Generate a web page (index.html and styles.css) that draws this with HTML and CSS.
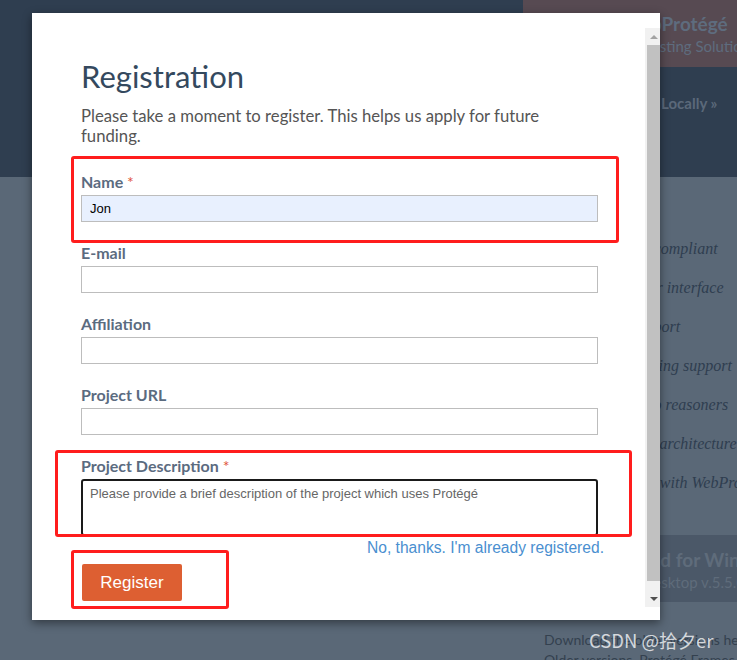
FILE: index.html
```html
<!DOCTYPE html>
<html lang="en">
<head>
<meta charset="utf-8">
<title>Registration</title>
<link rel="stylesheet" href="styles.css">
</head>
<body>
<div class="page">
  <header class="hero">
    <div class="hero-aside">
      <div class="brand">
        <div class="brand-name">WebProtégé</div>
        <div class="brand-sub">Hosting Solutions</div>
      </div>
      <div class="cta">Use Locally »</div>
    </div>
  </header>
  <section class="features">
    <div class="features-col">
      <ul class="feature-list">
        <li>W3C OWL 2 DL compliant</li>
        <li>Customizable user interface</li>
        <li>Visualization support</li>
        <li>Ontology refactoring support</li>
        <li>Direct interface to reasoners</li>
        <li>Highly pluggable architecture</li>
        <li>Cross compatible with WebProtégé</li>
      </ul>
      <div class="download-box">
        <div class="dl-title">Download for Windows</div>
        <div class="dl-sub">Desktop v.5.5.0</div>
      </div>
      <p class="dl-note">Download the older versions here<br>Older versions, Protégé Frames</p>
    </div>
  </section>
</div>

<div class="modal">
  <div class="frame">
    <div class="content">
      <h1 class="title">Registration</h1>
      <p class="intro">Please take a moment to register. This helps us apply for future funding.</p>
      <form class="form">
        <div class="field">
          <label class="label">Name <span class="req">*</span></label>
          <input class="input input-filled" type="text" value="Jon">
        </div>
        <div class="field">
          <label class="label">E-mail</label>
          <input class="input" type="text">
        </div>
        <div class="field">
          <label class="label">Affiliation</label>
          <input class="input" type="text">
        </div>
        <div class="field">
          <label class="label">Project URL</label>
          <input class="input" type="text">
        </div>
        <div class="field field-last">
          <label class="label">Project Description <span class="req">*</span></label>
          <textarea class="textarea" placeholder="Please provide a brief description of the project which uses Protégé"></textarea>
        </div>
        <div class="link-row"><a class="skip-link" href="#">No, thanks. I'm already registered.</a></div>
        <button class="btn" type="button">Register</button>
      </form>
    </div>
    <div class="scrollbar">
      <div class="sb-btn"><span class="arrow-up"></span></div>
      <div class="sb-track"><div class="sb-thumb"></div></div>
      <div class="sb-btn"><span class="arrow-down"></span></div>
    </div>
  </div>
</div>

<div class="mark mark-name"></div>
<div class="mark mark-desc"></div>
<div class="mark mark-btn"></div>

<div class="watermark">CSDN @拾夕er</div>
</body>
</html>
```

FILE: styles.css
```css
* { box-sizing: border-box; }

html, body {
  margin: 0;
  padding: 0;
}

body {
  width: 737px;
  height: 660px;
  overflow: hidden;
  position: relative;
  font-family: "Lato", "Open Sans", sans-serif;
  background: #5a6877;
}

/* ---------- backdrop page ---------- */
.page {
  display: flex;
  flex-direction: column;
  width: 737px;
}

.hero {
  height: 177px;
  background: #2f3e50;
  display: flex;
  justify-content: flex-end;
}

.hero-aside {
  width: 214px;
  display: flex;
  flex-direction: column;
}

.brand {
  height: 67px;
  background: #574a52;
  padding-top: 12px;
  padding-left: 99px;
  white-space: nowrap;
  color: #5e6c7e;
}

.brand-name {
  font-weight: 700;
  font-size: 19px;
  line-height: 24px;
}

.brand-sub {
  font-size: 15px;
  line-height: 20px;
  margin-left: 18px;
}

.cta {
  margin-top: 26px;
  padding-left: 109px;
  font-weight: 700;
  font-size: 15px;
  line-height: 20px;
  color: #5b697a;
  white-space: nowrap;
}

.features {
  background: #5a6877;
  padding-top: 52px;
  display: flex;
}

.features-col {
  margin-left: 544px;
  width: 240px;
  flex: none;
}

.feature-list {
  list-style: none;
  margin: 0;
  padding: 0;
  font-family: "Liberation Serif", "DejaVu Serif", serif;
  font-style: italic;
  font-size: 16px;
  line-height: 39px;
  color: #2f3e50;
  white-space: nowrap;
}

.download-box {
  margin-top: 33px;
  height: 67px;
  background: #4b5868;
  padding-top: 13px;
  color: #5f6c7b;
  white-space: nowrap;
}

.dl-title {
  font-weight: 700;
  font-size: 19px;
  line-height: 24px;
  padding-left: 40px;
}

.dl-sub {
  font-size: 15px;
  line-height: 20px;
  padding-left: 98px;
}

.dl-note {
  margin: 28px 0 0;
  font-size: 14px;
  line-height: 20px;
  color: #34414f;
  white-space: nowrap;
}

/* ---------- modal ---------- */
.modal {
  position: absolute;
  left: 32px;
  top: 13px;
  width: 628px;
  height: 607px;
  background: #fff;
  padding: 15px 0 13px 0;
  box-shadow: 0 3px 9px rgba(0, 0, 0, 0.45);
}

.frame {
  display: flex;
  height: 100%;
}

.content {
  flex: 1;
  overflow: hidden;
  padding: 29px 0 0 49px;
}

.title {
  margin: 0;
  font-family: "Lato", sans-serif;
  font-weight: 400;
  font-size: 31px;
  line-height: 38px;
  color: #34495e;
}

.intro {
  margin: 11px 0 0;
  max-width: 490px;
  font-size: 16.7px;
  line-height: 20px;
  color: #555555;
}

.form {
  margin-top: 27px;
  width: 523px;
  display: flex;
  flex-direction: column;
  align-items: flex-start;
}

.field {
  display: flex;
  flex-direction: column;
  margin-bottom: 22px;
}

.field-last {
  margin-bottom: 0;
}

.label {
  font-weight: 700;
  font-size: 16px;
  line-height: 18px;
  color: #5b6b7f;
  margin-bottom: 4px;
}

.req {
  color: #e0533b;
  font-weight: 400;
}

.input {
  width: 517px;
  height: 27px;
  border: 1px solid #bdbdbd;
  padding: 0 8px;
  font-family: "Liberation Sans", Arial, sans-serif;
  font-size: 13px;
  color: #000;
  background: #fff;
  outline: none;
  margin: 0;
}

.input-filled {
  background: #e8f0fe;
}

.textarea {
  width: 517px;
  height: 57px;
  border: 2px solid #1a1a1a;
  border-radius: 3px;
  padding: 5px 7px;
  font-family: "Liberation Sans", Arial, sans-serif;
  font-size: 13px;
  line-height: 16px;
  resize: none;
  outline: none;
  margin: 0;
  display: block;
}

.textarea::placeholder {
  color: #666666;
}

.link-row {
  width: 523px;
  margin-top: 3px;
  display: flex;
  justify-content: flex-end;
}

.skip-link {
  font-family: "Liberation Sans", Arial, sans-serif;
  font-size: 15.6px;
  line-height: 18px;
  color: #4a8fd0;
  text-decoration: none;
}

.btn {
  margin: 7px 0 0 1px;
  width: 100px;
  height: 37px;
  border: none;
  border-radius: 2px;
  background: #dd5f32;
  color: #fff;
  font-family: "Liberation Sans", Arial, sans-serif;
  font-size: 17px;
  padding: 0;
}

/* ---------- scrollbar ---------- */
.scrollbar {
  width: 15px;
  flex: none;
  background: #f1f1f1;
  display: flex;
  flex-direction: column;
}

.sb-btn {
  height: 17px;
  display: flex;
  align-items: center;
  justify-content: center;
  padding-left: 2px;
}

.arrow-up {
  width: 0;
  height: 0;
  border-left: 4px solid transparent;
  border-right: 4px solid transparent;
  border-bottom: 4px solid #a3a3a3;
}

.arrow-down {
  width: 0;
  height: 0;
  border-left: 4px solid transparent;
  border-right: 4px solid transparent;
  border-top: 4px solid #505050;
}

.sb-track {
  flex: 1;
  display: flex;
  flex-direction: column;
  padding-left: 2px;
  padding-bottom: 9px;
}

.sb-thumb {
  flex: 1;
  background: #c1c1c1;
}

/* ---------- annotation marks ---------- */
.mark {
  position: absolute;
  border: 3px solid #ff1d1d;
  border-radius: 3px;
}

.mark-name {
  left: 71px;
  top: 156px;
  width: 548px;
  height: 87px;
}

.mark-desc {
  left: 55px;
  top: 450px;
  width: 577px;
  height: 87px;
}

.mark-btn {
  left: 71px;
  top: 550px;
  width: 158px;
  height: 59px;
}

.watermark {
  position: absolute;
  left: 589px;
  top: 627px;
  font-family: "Noto Sans CJK SC", "Noto Sans", sans-serif;
  font-size: 18.5px;
  line-height: 26px;
  color: rgba(236, 238, 241, 0.85);
  white-space: nowrap;
}
```
